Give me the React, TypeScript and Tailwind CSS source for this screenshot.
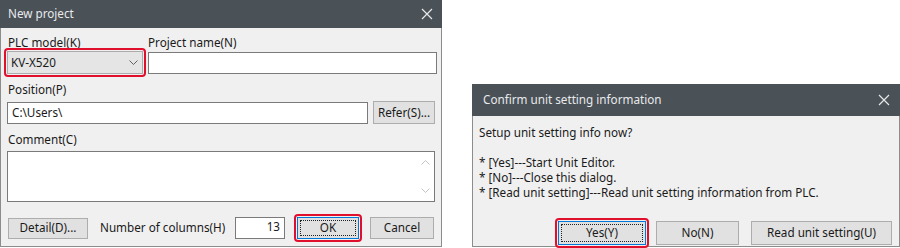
import React from 'react'

const FONT = "font-['Segoe_UI','Noto_Sans','Liberation_Sans',sans-serif]"

const CloseIcon: React.FC = () => (
  <svg width="12" height="12" viewBox="0 0 12 12" className="shrink-0">
    <path d="M1 1 L11 11 M11 1 L1 11" stroke="#e6e8ea" strokeWidth="1.2" fill="none" />
  </svg>
)

const Chevron: React.FC<{ up?: boolean; color?: string }> = ({ up, color = '#606060' }) => (
  <svg width="9" height="5" viewBox="0 0 9 5">
    <path d={up ? 'M0.5 4.5 L4.5 0.5 L8.5 4.5' : 'M0.5 0.5 L4.5 4.5 L8.5 0.5'} stroke={color} strokeWidth="1" fill="none" />
  </svg>
)

const RedRing: React.FC = () => (
  <span className="pointer-events-none absolute -inset-[3px] rounded-[4px] border-2 border-[#e0102c]" />
)

const Button: React.FC<{ label: string; className?: string; focused?: boolean }> = ({ label, className = '', focused }) => (
  <div className={`relative ${className}`}>
    <button
      className={`flex h-full w-full items-center justify-center border bg-[#e1e1e1] text-[#1a1a1a] ${
        focused ? 'border-[#0078d7]' : 'border-[#adadad]'
      }`}
    >
      {focused && <span className="pointer-events-none absolute inset-[3px] border border-dotted border-[#222]" />}
      {label}
    </button>
    {focused && <RedRing />}
  </div>
)

const TitleBar: React.FC<{ title: string; className?: string }> = ({ title, className = '' }) => (
  <div className={`flex items-center justify-between bg-[#4a5157] pl-[8px] pr-[9px] text-[11.7px] text-[#e8eaec] ${className}`}>
    <span>{title}</span>
    <CloseIcon />
  </div>
)

const NewProjectDialog: React.FC = () => (
  <div className="flex h-[247px] w-[442px] shrink-0 flex-col border border-[#8c8c8c] border-t-0 bg-[#f0f0f0]">
    <TitleBar title="New project" className="h-[28px] -mx-px" />
    <div className="flex flex-col px-[6px] pt-[7px] text-[11.7px] text-[#1a1a1a]">
      <div className="flex h-[16px] items-center">
        <span className="w-[141px] pl-px">PLC model(K)</span>
        <span>Project name(N)</span>
      </div>
      <div className="flex h-[23px] items-start gap-[5px]">
        <div className="relative h-[23px] w-[136px]">
          <div className="flex h-full items-center justify-between border border-[#acacac] bg-[#e5e5e5] pl-[3px] pr-[4px]">
            <span>KV-X520</span>
            <Chevron />
          </div>
          <RedRing />
        </div>
        <div className="mt-px h-[22px] flex-1 border border-[#7a7a7a] bg-white mr-[-2px]" />
      </div>
      <div className="mt-[8px] flex h-[16px] items-center pl-px">Position(P)</div>
      <div className="mt-[3px] flex h-[24px] items-stretch gap-[5px]">
        <div className="mt-px flex h-[22px] w-[361px] items-center border border-[#7a7a7a] bg-white pl-[4px]">C:\Users\</div>
        <Button label="Refer(S)..." className="h-[23px] flex-1" />
      </div>
      <div className="mt-[7px] flex h-[16px] items-center pl-px">Comment(C)</div>
      <div className="mt-[3px] flex h-[51px] justify-end border border-[#7a7a7a] bg-white">
        <div className="flex w-[17px] flex-col items-center justify-between py-[8px]">
          <Chevron up color="#c2c2c2" />
          <Chevron color="#c2c2c2" />
        </div>
      </div>
      <div className="mt-[15px] flex h-[22px] items-center">
        <Button label="Detail(D)..." className="ml-px h-[21px] w-[80px]" />
        <span className="ml-[12px] w-[135px]">Number of columns(H)</span>
        <div className="flex h-[22px] w-[50px] items-start justify-end border border-[#7a7a7a] bg-white pr-[4px] leading-[16px]">13</div>
        <Button label="OK" focused className="ml-[12px] h-[22px] w-[62px]" />
        <Button label="Cancel" className="ml-[11px] h-[22px] w-[64px]" />
      </div>
    </div>
  </div>
)

const ConfirmDialog: React.FC = () => (
  <div className="mt-[84px] flex h-[163px] w-[428px] shrink-0 flex-col border border-[#8c8c8c] border-t-0 bg-[#f0f0f0]">
    <TitleBar title="Confirm unit setting information" className="h-[32px] -mx-px pl-[11px] pr-[10px]" />
    <div className="flex flex-col px-[6px] pt-[8px] text-[11.7px] text-[#1a1a1a]">
      <div className="h-[16px] leading-[16px]">Setup unit setting info now?</div>
      <div className="mt-[15px] flex flex-col">
        <span className="h-[15px] leading-[15px]">* [Yes]---Start Unit Editor.</span>
        <span className="h-[15px] leading-[15px]">* [No]---Close this dialog.</span>
        <span className="h-[15px] leading-[15px]">* [Read unit setting]---Read unit setting information from PLC.</span>
      </div>
      <div className="mt-[21px] flex h-[24px] items-center justify-end pr-[1px]">
        <Button label="Yes(Y)" focused className="h-[24px] w-[88px]" />
        <Button label="No(N)" className="ml-[10px] h-[24px] w-[83px]" />
        <Button label="Read unit setting(U)" className="ml-[12px] h-[24px] w-[141px]" />
      </div>
    </div>
  </div>
)

export default function App() {
  return (
    <div className={`flex h-[248px] w-[900px] items-start gap-[30px] overflow-hidden bg-white ${FONT}`}>
      <NewProjectDialog />
      <ConfirmDialog />
    </div>
  )
}
